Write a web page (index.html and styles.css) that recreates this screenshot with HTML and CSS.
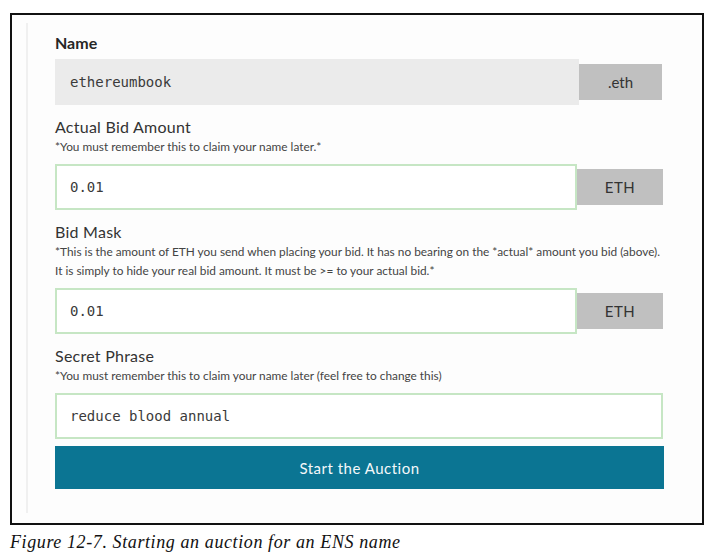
FILE: index.html
```html
<!DOCTYPE html>
<html>
<head>
<meta charset="utf-8">
<link rel="stylesheet" href="styles.css">
</head>
<body>
<figure class="figure">
  <div class="frame">
    <div class="panel">
      <form class="form">
        <div class="field field-name">
          <label class="label label-strong">Name</label>
          <div class="row">
            <input class="input input-plain" value="ethereumbook">
            <span class="addon addon-name">.eth</span>
          </div>
        </div>
        <div class="field">
          <label class="label">Actual Bid Amount</label>
          <div class="hint">*You must remember this to claim your name later.*</div>
          <div class="row">
            <input class="input input-eth" value="0.01">
            <span class="addon addon-eth">ETH</span>
          </div>
        </div>
        <div class="field">
          <label class="label">Bid Mask</label>
          <div class="hint">*This is the amount of ETH you send when placing your bid. It has no bearing on the *actual* amount you bid (above).<br>It is simply to hide your real bid amount. It must be &gt;= to your actual bid.*</div>
          <div class="row">
            <input class="input input-eth" value="0.01">
            <span class="addon addon-eth">ETH</span>
          </div>
        </div>
        <div class="field">
          <label class="label">Secret Phrase</label>
          <div class="hint">*You must remember this to claim your name later (feel free to change this)</div>
          <div class="row">
            <input class="input input-full" value="reduce blood annual">
          </div>
        </div>
        <button type="button" class="submit">Start the Auction</button>
      </form>
    </div>
  </div>
  <figcaption class="caption">Figure 12-7. Starting an auction for an ENS name</figcaption>
</figure>
</body>
</html>
```

FILE: styles.css
```css
body {
  margin: 0;
  background: #fff;
}

.figure {
  margin: 0;
  padding: 13px 0 0 10px;
}

.frame {
  width: 694px;
  height: 512px;
  box-sizing: border-box;
  border: 2px solid #111;
  background: #fdfdfd;
  padding: 8px 0 10px 14px;
}

.panel {
  height: 100%;
  box-sizing: border-box;
  border-left: 2px solid #f0f0f0;
  padding: 10px 0 0 27px;
}

.form {
  width: 608px;
  display: flex;
  flex-direction: column;
  margin: 0;
}

.field {
  display: flex;
  flex-direction: column;
}

.field + .field {
  margin-top: 12px;
}

.label {
  font-family: Lato, "Liberation Sans", sans-serif;
  font-size: 16px;
  line-height: 20px;
  letter-spacing: 0.25px;
  color: #333;
}

.label-strong {
  font-weight: 700;
  letter-spacing: 0;
  color: #262626;
}

.hint {
  font-family: Lato, "Liberation Sans", sans-serif;
  font-size: 11.85px;
  line-height: 19px;
  color: #444;
  white-space: nowrap;
}

.row {
  display: flex;
  align-items: center;
  margin-top: 8px;
}

.field-name .row {
  margin-top: 6px;
}

.input {
  box-sizing: border-box;
  height: 46px;
  margin: 0;
  padding: 0 13px;
  border: 2px solid #c6e6c4;
  background: #fff;
  font-family: "DejaVu Sans Mono", monospace;
  font-size: 14px;
  color: #3a3a3a;
  outline: none;
  border-radius: 0;
}

.input-plain {
  width: 524px;
  border: none;
  padding: 0 15px;
  background: #ebebeb;
}

.input-eth {
  width: 522px;
}

.input-full {
  width: 609px;
}

.addon {
  display: flex;
  align-items: center;
  justify-content: center;
  height: 36px;
  background: #c0c0c0;
  font-family: Lato, "Liberation Sans", sans-serif;
  font-size: 15px;
  color: #333;
}

.addon-name {
  width: 83px;
}

.addon-eth {
  width: 86px;
  letter-spacing: 0.5px;
}

.submit {
  margin-top: 7px;
  height: 43px;
  width: 609px;
  border: none;
  background: #0b7593;
  color: #f4f8fa;
  font-family: Lato, "Liberation Sans", sans-serif;
  font-size: 15px;
  letter-spacing: 0.5px;
  padding: 0;
}

.caption {
  margin-top: 7px;
  font-family: "Liberation Serif", serif;
  font-style: italic;
  font-size: 18px;
  line-height: 20px;
  letter-spacing: 0.6px;
  color: #111;
}
```
